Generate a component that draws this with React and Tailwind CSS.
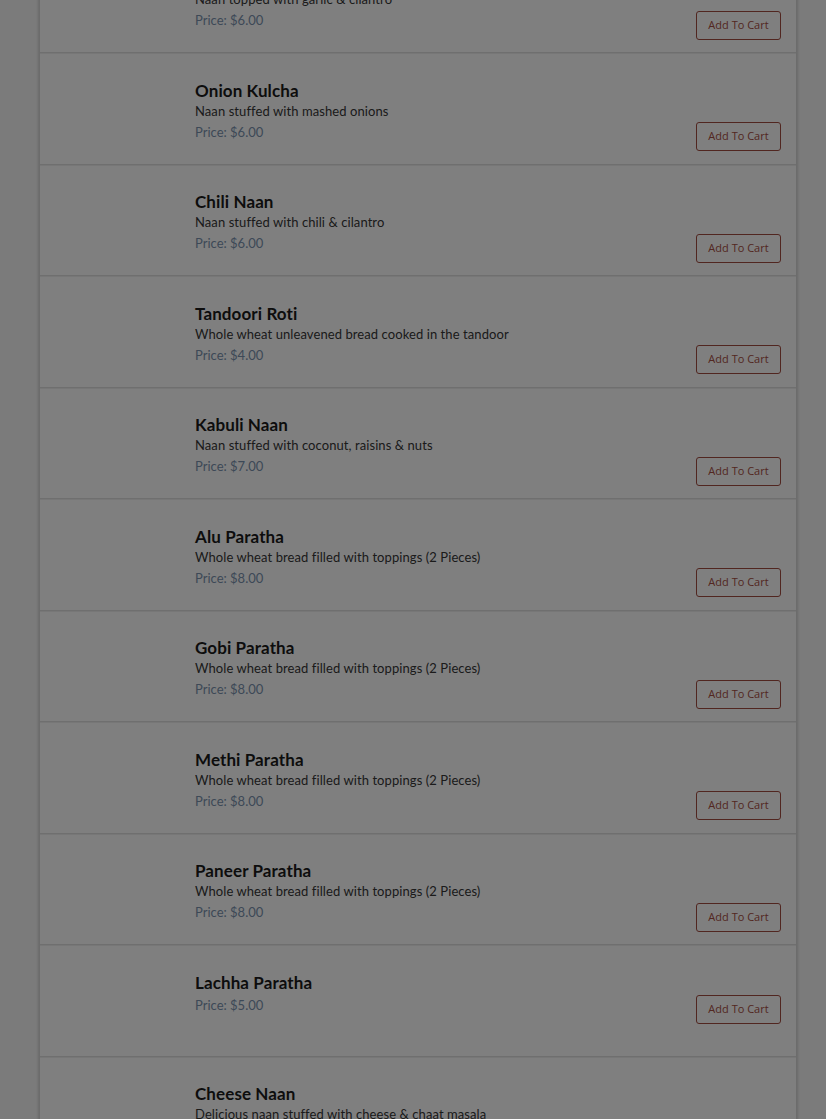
import React from 'react';

const items = [
  { name: 'Garlic Naan', desc: 'Naan topped with garlic & cilantro', price: '6.00' },
  { name: 'Onion Kulcha', desc: 'Naan stuffed with mashed onions', price: '6.00' },
  { name: 'Chili Naan', desc: 'Naan stuffed with chili & cilantro', price: '6.00' },
  { name: 'Tandoori Roti', desc: 'Whole wheat unleavened bread cooked in the tandoor', price: '4.00' },
  { name: 'Kabuli Naan', desc: 'Naan stuffed with coconut, raisins & nuts', price: '7.00' },
  { name: 'Alu Paratha', desc: 'Whole wheat bread filled with toppings (2 Pieces)', price: '8.00' },
  { name: 'Gobi Paratha', desc: 'Whole wheat bread filled with toppings (2 Pieces)', price: '8.00' },
  { name: 'Methi Paratha', desc: 'Whole wheat bread filled with toppings (2 Pieces)', price: '8.00' },
  { name: 'Paneer Paratha', desc: 'Whole wheat bread filled with toppings (2 Pieces)', price: '8.00' },
  { name: 'Lachha Paratha', desc: '', price: '5.00' },
  { name: 'Cheese Naan', desc: 'Delicious naan stuffed with cheese & chaat masala', price: '9.00' },
];

function MenuRow({ item }) {
  return (
    <div className="h-[111.5px] flex pl-4 pr-[15px] border-b border-[#dedede] shadow-[0_1px_0_#efefef]">
      <div className="w-[124px] shrink-0" />
      <div className="flex-1 flex items-end justify-between pl-[15px] pt-[26.5px] self-start">
        <div className="pb-[8.5px]">
          <div className="text-[17px] leading-[21px] font-bold text-[#1a1a1a] tracking-[0.1px]">{item.name}</div>
          {item.desc ? (
            <div className="text-[13px] leading-[21px] text-[#363636] tracking-[0.08px]">{item.desc}</div>
          ) : (
            <div className="h-[2px]" />
          )}
          <div className="text-[13px] leading-[21px] text-[#7a92ae]">Price: ${item.price}</div>
        </div>
        <button className="w-[85px] h-[29px] border border-[#a24c40] rounded-[3px] bg-white text-[11px] text-[#a64e42] font-['Open_Sans',sans-serif]">
          Add To Cart
        </button>
      </div>
    </div>
  );
}

export default function App() {
  return (
    <div className="min-h-screen bg-[#f6f6f6] font-['Lato','Liberation_Sans',sans-serif] overflow-hidden h-[1119px]">
      <div className="ml-[39px] w-[758px] bg-white border-x border-[#d8d8d8] shadow-[0_0_3px_rgba(0,0,0,0.25)] -mt-[58.5px]">
        {items.map((item) => (
          <MenuRow key={item.name} item={item} />
        ))}
      </div>
      <div className="fixed inset-0 bg-black/50" />
    </div>
  );
}
